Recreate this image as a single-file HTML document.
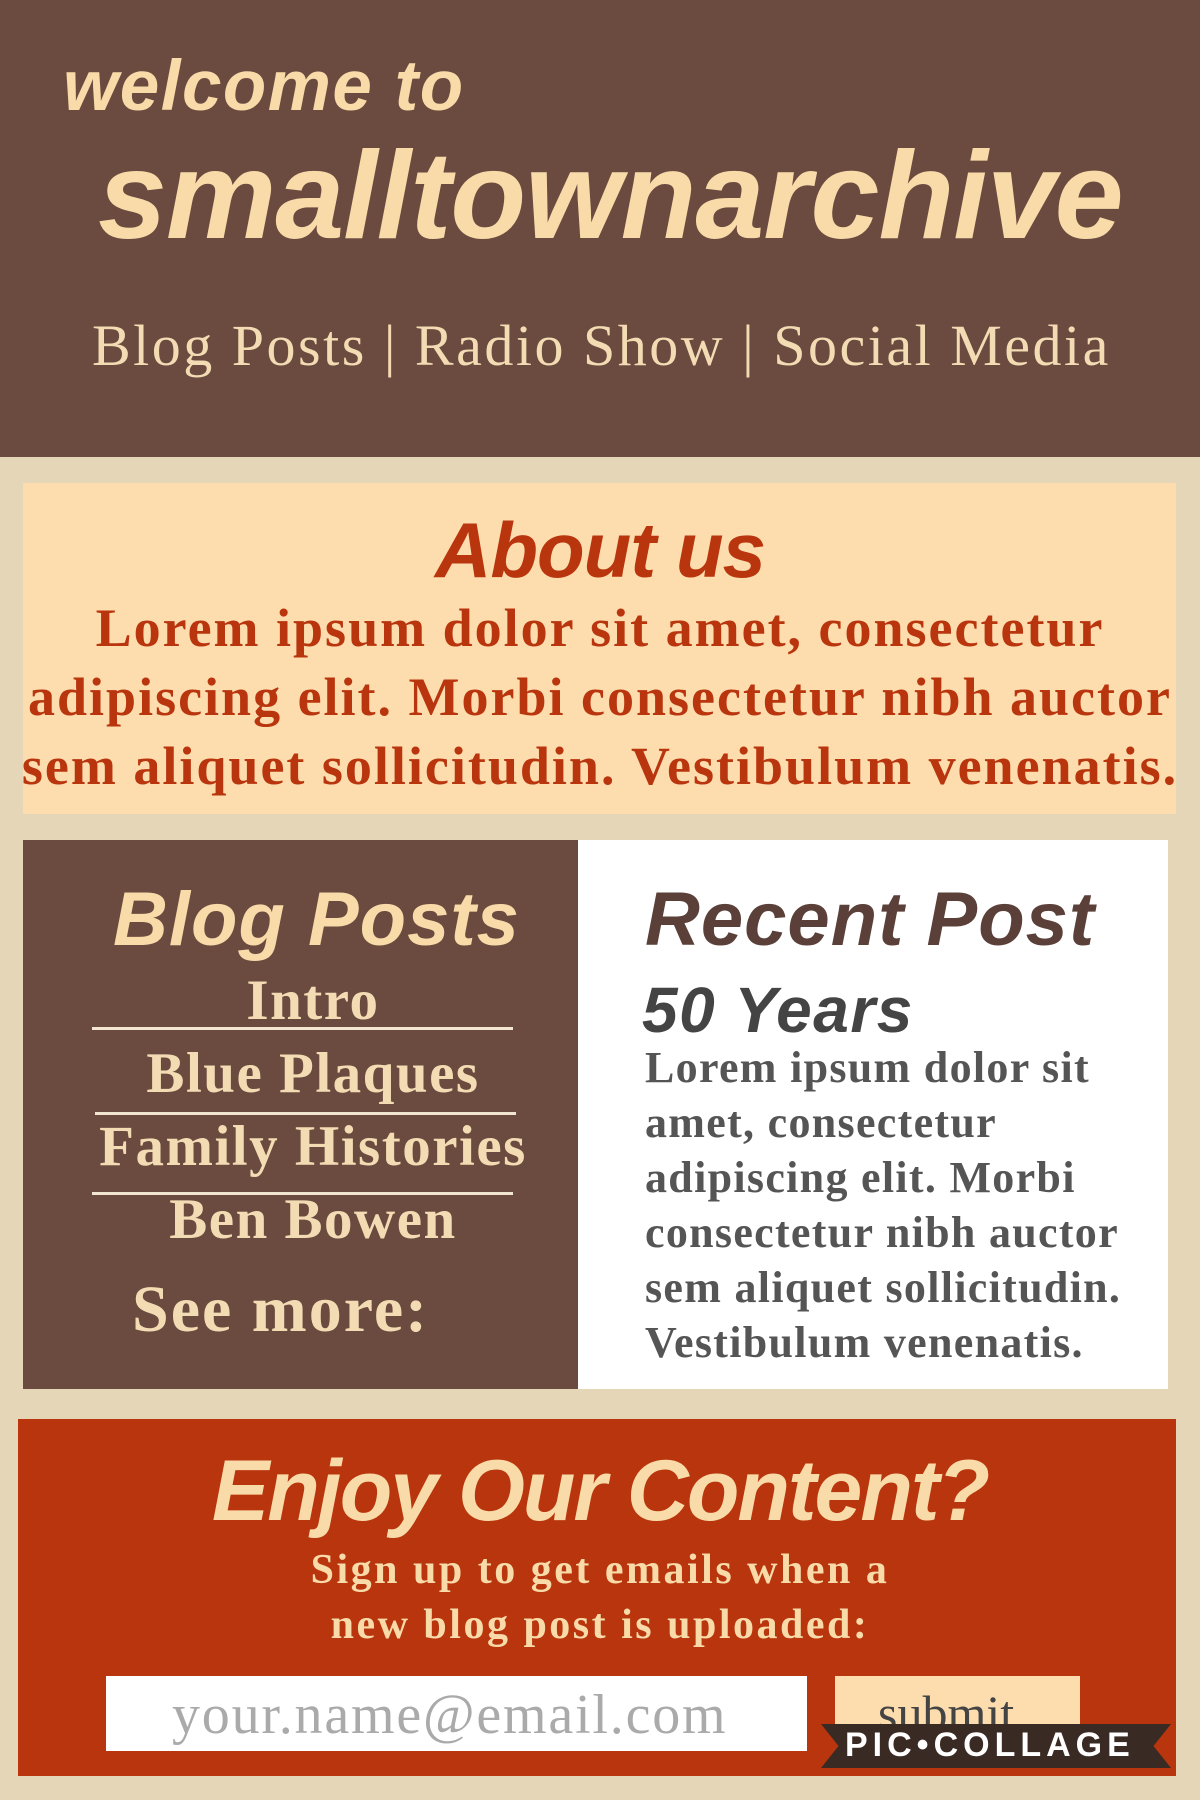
<!DOCTYPE html>
<html><head><meta charset="utf-8"><style>
*{margin:0;padding:0;box-sizing:border-box}
body{width:1200px;height:1800px;background:#e6d6b8;position:relative;overflow:hidden;font-family:"Liberation Serif",serif}
.a{position:absolute;white-space:nowrap}
.sans{font-family:"Liberation Sans",sans-serif;font-weight:bold;font-style:italic}
.ser{font-family:"Liberation Serif",serif;font-weight:bold}
</style></head><body>
<div class="a" style="left:0;top:0;width:1200px;height:457px;background:#6b4a3f"></div>
<div class="a sans" style="left:63px;top:46px;font-size:71px;color:#f8dba8;letter-spacing:1.5px">welcome to</div>
<div class="a sans" style="left:98px;top:125px;font-size:124px;color:#f8dba8;letter-spacing:-1px">smalltownarchive</div>
<div class="a" style="left:92px;top:312px;font-size:58px;color:#f3dcb3;font-family:'Liberation Serif',serif;letter-spacing:2.5px">Blog Posts | Radio Show | Social Media</div>

<div class="a" style="left:23px;top:483px;width:1153px;height:331px;background:#fddcae"></div>
<div class="a sans" style="left:0;width:1200px;text-align:center;top:505px;font-size:78px;color:#b9350e;letter-spacing:-1px">About us</div>
<div class="a ser" style="left:0;width:1200px;text-align:center;top:594px;font-size:54px;line-height:69px;color:#b9350e;white-space:normal;letter-spacing:2px">Lorem ipsum dolor sit amet, consectetur<br>adipiscing elit. Morbi consectetur nibh auctor<br>sem aliquet sollicitudin. Vestibulum venenatis.</div>

<div class="a" style="left:23px;top:840px;width:555px;height:549px;background:#6b4a3f"></div>
<div class="a" style="left:578px;top:840px;width:590px;height:549px;background:#fff"></div>
<div class="a sans" style="left:113px;top:876px;font-size:76px;color:#f8dba8;letter-spacing:1px">Blog Posts</div>
<div class="a ser" style="left:23px;width:580px;text-align:center;top:964px;font-size:57px;line-height:73px;color:#f3dcb3;letter-spacing:1.5px">Intro<br>Blue Plaques<br>Family Histories<br>Ben Bowen</div>
<div class="a" style="left:92px;top:1027px;width:421px;height:3px;background:#f3e6d0"></div>
<div class="a" style="left:95px;top:1112px;width:421px;height:3px;background:#f3e6d0"></div>
<div class="a" style="left:92px;top:1192px;width:421px;height:3px;background:#f3e6d0"></div>
<div class="a ser" style="left:132px;top:1272px;font-size:66px;color:#f3dcb3;letter-spacing:2px">See more:</div>

<div class="a sans" style="left:645px;top:876px;font-size:76px;color:#5a4038;letter-spacing:1px">Recent Post</div>
<div class="a sans" style="left:642px;top:973px;font-size:64px;color:#444;letter-spacing:1.5px">50 Years</div>
<div class="a ser" style="left:645px;top:1040px;font-size:44px;line-height:55px;color:#555;white-space:normal;letter-spacing:1.3px">Lorem ipsum dolor sit<br>amet, consectetur<br>adipiscing elit. Morbi<br>consectetur nibh auctor<br>sem aliquet sollicitudin.<br>Vestibulum venenatis.</div>

<div class="a" style="left:18px;top:1419px;width:1158px;height:357px;background:#b9350e"></div>
<div class="a sans" style="left:0;width:1200px;text-align:center;top:1442px;font-size:86px;color:#f8dba8;letter-spacing:-2px">Enjoy Our Content?</div>
<div class="a ser" style="left:0;width:1200px;text-align:center;top:1543px;font-size:42px;line-height:55px;color:#f8dba8;white-space:normal;letter-spacing:2.5px">Sign up to get emails when a<br>new blog post is uploaded:</div>
<div class="a" style="left:106px;top:1676px;width:701px;height:75px;background:#fff"></div>
<div class="a" style="left:172px;top:1683px;font-size:56px;color:#aaa;letter-spacing:1.8px">your.name@email.com</div>
<div class="a" style="left:835px;top:1676px;width:245px;height:58px;background:#fddcae"></div>
<div class="a" style="left:878px;top:1684px;font-size:50px;color:#444">submit</div>
<div class="a" style="left:821px;top:1724px;width:350px;height:44px;background:#3a2a24;clip-path:polygon(0 0,100% 0,95% 50%,100% 100%,0 100%,5% 50%)"></div>
<div class="a" style="left:845px;top:1726px;font-family:'Liberation Sans',sans-serif;font-weight:bold;font-size:34px;color:#fff;letter-spacing:5px">PIC•COLLAGE</div>
</body></html>
